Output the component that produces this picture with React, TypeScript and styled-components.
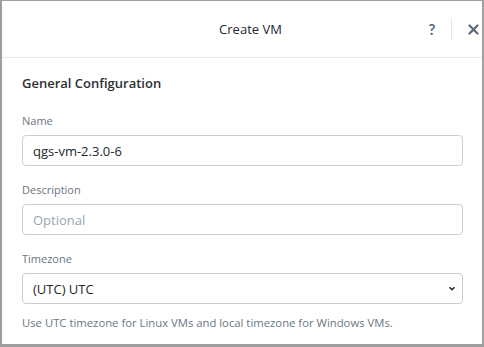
import * as React from 'react';
import styled, { createGlobalStyle } from 'styled-components';

const GlobalStyle = createGlobalStyle`
    html, body {
        margin: 0;
        padding: 0;
        background: #fff;
    }
    body {
        font-family: "Open Sans", Lato, sans-serif;
        -webkit-font-smoothing: antialiased;
    }
`;

const Frame = styled.div`
    box-sizing: border-box;
    width: 484px;
    height: 347px;
    border-style: solid;
    border-color: #9e9e9e;
    border-width: 1px 2px 3px 2px;
    background: #fff;
    overflow: hidden;
    display: flex;
    flex-direction: column;
`;

const Header = styled.header`
    height: 56px;
    flex-shrink: 0;
    display: flex;
    align-items: center;
    border-bottom: 1px solid #e8ebee;
`;

const Title = styled.h1`
    flex: 1;
    margin: 0;
    padding-left: 76px;
    text-align: center;
    font-size: 13px;
    font-weight: 400;
    color: #22272e;
`;

const Actions = styled.div`
    display: flex;
    align-items: center;
    height: 22px;
`;

const IconButton = styled.button`
    border: 0;
    background: none;
    padding: 0;
    width: 18px;
    height: 22px;
    display: flex;
    align-items: center;
    justify-content: center;
    color: #5a6877;
    font-family: Lato, sans-serif;
    font-size: 15px;
    font-weight: 700;
    cursor: pointer;
`;

const Divider = styled.span`
    width: 1px;
    align-self: stretch;
    background: #e4e8ec;
    margin: 0 12px 0 10px;
`;

const Body = styled.main`
    padding: 16px 19px 0 20px;
    display: flex;
    flex-direction: column;
`;

const SectionTitle = styled.h2`
    margin: 0 0 21px;
    font-size: 13px;
    font-weight: 600;
    color: #2b2f35;
`;

const Field = styled.div`
    display: flex;
    flex-direction: column;
    margin-bottom: 16px;
`;

const Label = styled.label`
    font-size: 11px;
    line-height: 15px;
    color: #6b7683;
    margin-bottom: 7px;
`;

const Input = styled.input`
    box-sizing: border-box;
    height: 31px;
    width: 100%;
    border: 1px solid #c9cfd6;
    border-radius: 4px;
    padding: 0 10px;
    font-family: "Open Sans", sans-serif;
    font-size: 13px;
    color: #22272e;
    outline: none;

    &::placeholder {
        color: #9aa5b1;
    }
`;

const SelectBox = styled.div`
    box-sizing: border-box;
    height: 31px;
    border: 1px solid #c9cfd6;
    border-radius: 4px;
    padding: 0 6px 0 10px;
    display: flex;
    align-items: center;
    justify-content: space-between;
    font-size: 13px;
    color: #22272e;
`;

const Help = styled.p`
    margin: 11px 0 0;
    font-size: 11.3px;
    line-height: 15px;
    color: #6b7683;
`;

const App: React.FC = () => {
    return (
        <>
            <GlobalStyle />
            <Frame>
                <Header>
                    <Title>Create VM</Title>
                    <Actions>
                        <IconButton>?</IconButton>
                        <Divider />
                        <IconButton>
                            <svg width="11" height="11" viewBox="0 0 11 11">
                                <path d="M1.5 1.5 L9.5 9.5 M9.5 1.5 L1.5 9.5" stroke="#5a6877" strokeWidth="2.2" strokeLinecap="round" />
                            </svg>
                        </IconButton>
                    </Actions>
                </Header>
                <Body>
                    <SectionTitle>General Configuration</SectionTitle>
                    <Field>
                        <Label>Name</Label>
                        <Input defaultValue="qgs-vm-2.3.0-6" />
                    </Field>
                    <Field>
                        <Label>Description</Label>
                        <Input placeholder="Optional" />
                    </Field>
                    <Field>
                        <Label>Timezone</Label>
                        <SelectBox>
                            <span>(UTC) UTC</span>
                            <svg width="8" height="5" viewBox="0 0 8 5">
                                <path d="M1.5 1.2 L4 3.7 L6.5 1.2" fill="none" stroke="#22272e" strokeWidth="1.6" />
                            </svg>
                        </SelectBox>
                        <Help>Use UTC timezone for Linux VMs and local timezone for Windows VMs.</Help>
                    </Field>
                </Body>
            </Frame>
        </>
    );
};

export default App;
